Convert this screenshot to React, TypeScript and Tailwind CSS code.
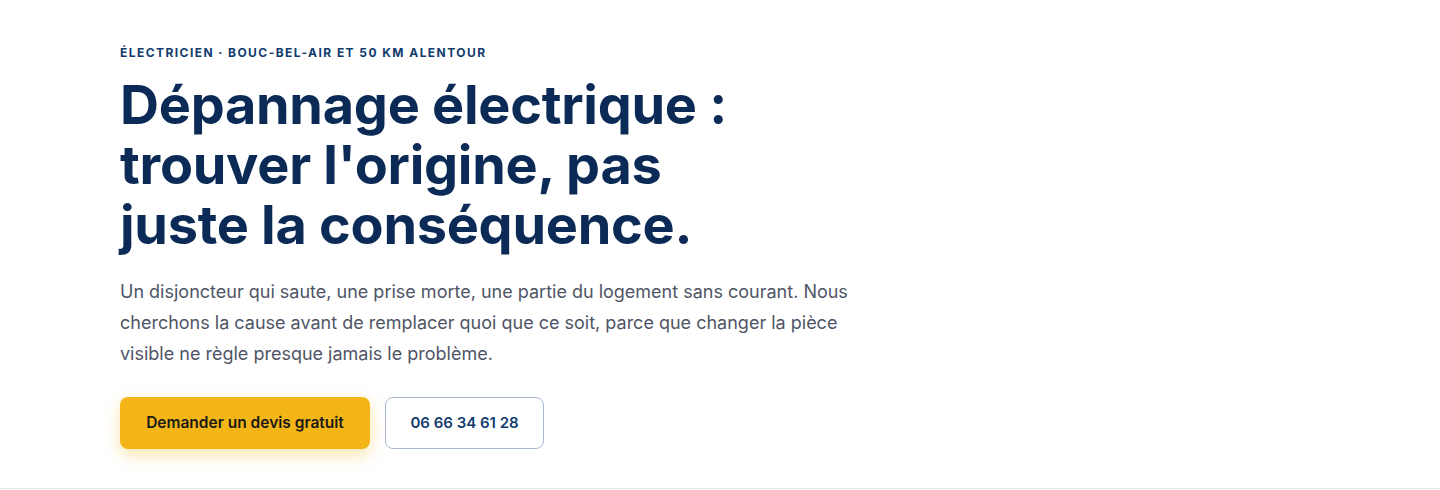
export default function App() {
  return (
    <div className="min-h-[490px] bg-white" style={{ fontFamily: "Inter, 'Noto Sans', sans-serif" }}>
      <section className="border-b border-[#e3e8e8] px-[120px] pt-[46px] pb-[39px]">
        <p className="text-[12px] font-bold uppercase tracking-[0.12em] text-[#123c6e] leading-[14px]">
          Électricien · Bouc-Bel-Air et 50 km alentour
        </p>
        <h1 className="mt-[15px] max-w-[660px] text-[54px] font-bold leading-[60px] tracking-[-0.005em] text-[#0b2a55]">
          Dépannage électrique : trouver l'origine, pas juste la conséquence.
        </h1>
        <p className="mt-[21px] max-w-[770px] text-[18px] leading-[31px] text-[#4f5566]">
          Un disjoncteur qui saute, une prise morte, une partie du logement sans courant. Nous cherchons la cause avant de remplacer quoi que ce soit, parce que changer la pièce visible ne règle presque jamais le problème.
        </p>
        <div className="mt-[28px] flex gap-[15px]">
          <a className="flex h-[52px] w-[250px] items-center justify-center rounded-[8px] bg-[#f4b516] text-[15.5px] font-semibold text-[#1a1a1a] shadow-[0_6px_16px_rgba(244,181,22,0.35)]">
            Demander un devis gratuit
          </a>
          <a className="flex h-[52px] w-[159px] items-center justify-center rounded-[8px] border border-[#a9b8d0] bg-white text-[15px] font-semibold text-[#123c6e]">
            06 66 34 61 28
          </a>
        </div>
      </section>
    </div>
  );
}
